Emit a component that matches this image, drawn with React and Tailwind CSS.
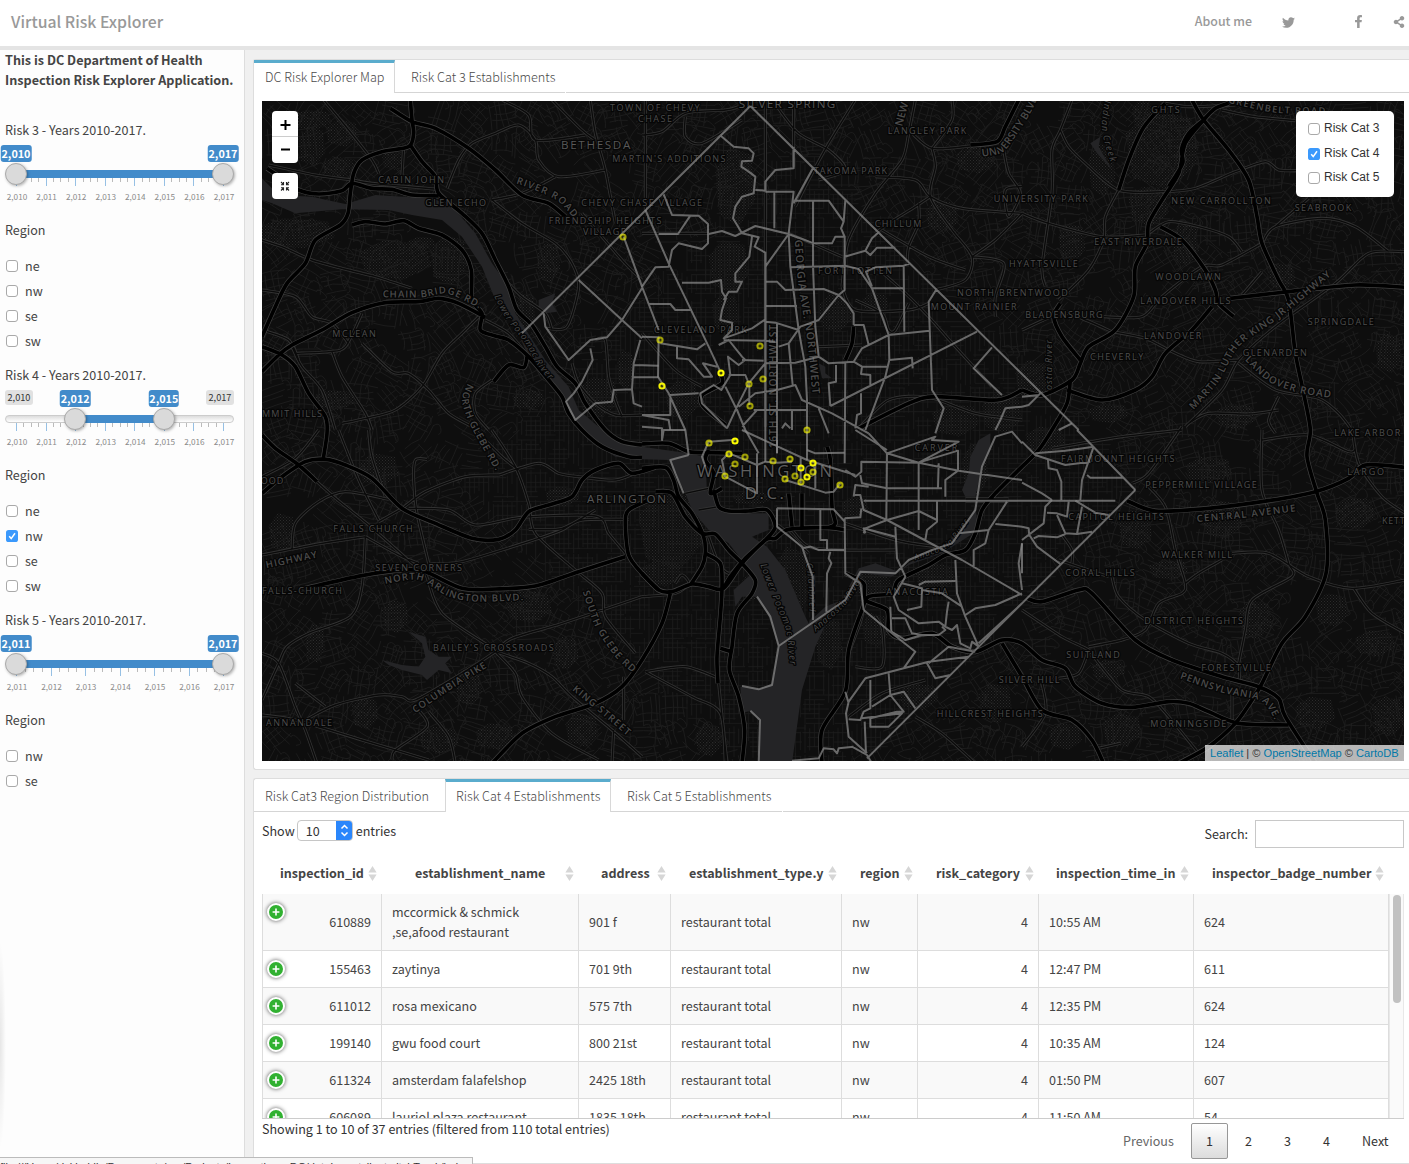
import React from "react";
import { FaTwitter, FaFacebookF, FaShareAlt } from "react-icons/fa";

const UI = "font-['Noto_Sans_CJK_SC','Noto_Sans',sans-serif]";

/* ---------- map data: six sheets, three units per pixel ---------- */
const SHEETS = { A: [0, 0], B: [1140, 0], C: [2280, 0], D: [0, 990], E: [1140, 990], F: [2280, 990] };

const MOTORWAYS = {
  A: `445,0 450,60 455,100 440,140 360,155 300,180 275,220 265,280 258,340 235,375 160,420 130,490 75,550 40,620 0,710
445,135 480,185 520,230 530,280 600,340 660,400 700,480 740,560 765,630 810,675 850,740 885,800 940,850 970,910 1030,990 1080,1025 1140,1035
385,25 450,65 520,85 620,145 700,210 780,285 860,310 910,350
15,205 60,235 110,270 170,282 240,272 270,250 330,265 390,268 450,285 530,288
270,375 310,365 370,372 425,362 470,385 540,405 600,450 628,510 630,600 660,640 655,690 700,708 740,720 800,770 860,840 900,890 920,940 960,990 1020,1040 1100,1070 1140,1072
0,815 50,765 90,735 180,690 270,638 370,608 470,605 530,595 590,610 670,652
0,740 60,765 100,800 140,880 190,950 195,1000 184,1075
695,845 740,795 785,803 795,770`,
  B: `1140,870 1065,900 880,890 800,910 650,985
985,135 1065,125 1090,80 1130,0
235,820 240,850 180,885 185,920 250,975
635,680 630,730 610,780`,
  C: `510,0 545,60 620,150 680,240 705,350 720,430 770,540 800,600 820,760 845,880 865,990 855,1070 885,1180 910,1260 912,1420 850,1550 780,1630 720,1750 690,1800 640,1870 560,1940 470,1990
620,10 580,25 545,60 490,130 470,220 420,300 380,370 375,430 340,500 335,590 280,690 200,740 175,790 150,840 60,885 0,870
545,60 500,100 478,150 482,190 440,260
430,10 400,40 360,90 320,180 290,270
415,380 480,420 550,510 580,570 590,610 635,650
135,870 240,900 340,870 390,830 430,760 510,690 570,620
625,595 800,575 1000,555 1150,562
115,610 95,650 120,710 175,780`,
  D: `0,190 60,140 130,95 190,88 250,105 330,145 420,235 520,280 630,325 710,328 760,300 800,245 860,225 930,200 960,150 1000,120 1070,100 1110,130 1180,112
0,15 40,55 110,105 165,155
130,475 300,437 420,420 490,425 600,475 700,477 820,468 950,425 1090,380
1160,210 1100,240 1090,280 1100,375 1140,430 1190,480
690,1000 780,910 880,860 1000,820 1080,770 1140,690 1200,580 1225,490`,
  E: `0,42 80,40 140,65 210,68 300,70
0,115 70,112 95,150 110,200 150,250 185,320 190,370 180,410 145,465
0,430 50,480 90,485 150,462 200,470 245,475 300,400 370,330 400,325 440,298 560,293 610,300
40,185 90,190 130,260 180,310 220,312 260,360 300,400 340,450 330,490 285,550 270,650 262,720 290,800 308,900 300,1000
190,370 235,400 240,475 235,560 225,680 228,760
215,180 230,230 260,243 320,243 375,240 400,290 370,330 310,385 265,440 245,475
555,50 565,90 570,230 580,280 560,293
200,60 190,90 215,130 205,190 240,175
440,190 450,290
480,190 480,290
235,655 268,665
540,1000 540,900 610,785 620,660 660,540 680,500 750,490 770,450 860,405 910,375 970,360 1000,310 1020,240 1060,190 1140,110 1190,60 1230,0 1275,-80 1285,-150
610,430 665,460 670,510 735,540 740,600 780,625 870,610 930,650 1000,665 1080,630 1140,640 1200,690 1270,715 1300,770 1380,820 1470,832 1580,815 1640,820 1700,845 1790,880 1940,885
970,210 1100,210
1080,640 1140,740 1200,840 1290,870 1350,930 1385,1000`,
  F: `15,505 60,515 170,480 210,490 340,630 450,690 600,740 710,770 770,805 790,860 880,1000
315,212 400,243 560,235 740,212 880,185 980,145 1030,105 1150,112`,
};

const ROADS = {
  A: `185,0 260,90 330,180 350,220
20,195 160,225 270,240 330,250 530,268
425,140 420,225
0,420 60,440 150,480 260,510 340,530 450,565
0,570 100,590 150,650 210,670 260,730
555,265 590,180 630,130 700,100 770,75 820,120 830,180 890,230 1030,210
870,0 960,90 1000,120
985,0 1000,100 1030,210 1060,370
720,0 800,45 820,120 970,105
690,300 780,370 880,430 930,490 950,560 915,680 855,685
90,740 120,800 180,870 220,990
100,760 200,755 250,740 300,640
210,755 240,830 310,940 330,990
300,730 390,815 440,820 500,870 560,940 640,985
240,970 310,955 400,930 480,860 540,760 600,700 650,650
690,840 640,880 640,940 680,990
670,660 740,700 800,770
690,300 780,280 880,230
730,540 780,590 850,640 870,690
930,790 950,850 1000,910 1060,945 1140,945
960,340 1080,480 1140,540
1000,720 1030,720 1040,830 1060,900 1080,950
0,690 80,720 110,780`,
  B: `10,0 10,330
0,105 60,95 130,40 250,30 290,20
130,50 130,110 180,130 300,60
370,0 370,980
455,0 455,200
405,20 470,100 560,150 610,210 530,240
640,0 560,130 500,240 460,320
820,0 800,100 780,180 700,280 620,420 600,560
930,0 930,60 870,145
810,100 870,145 985,138
870,145 880,200 865,290 930,390 990,470 970,540 880,570
700,230 820,240 865,290 960,325 1140,340
865,290 820,320 740,370 700,400
830,310 830,370 800,440 795,500
990,470 1085,490 1060,590 1060,650
1085,150 1100,220 1135,280 1100,350 1090,270 1140,260
1140,340 1060,420 990,470
440,400 600,470
720,390 860,470 970,510
600,560 640,630 800,630 860,610
700,500 780,570 860,650 940,740 1050,860
0,700 100,810 180,860
530,740 660,735
0,400 200,400
640,600 720,640 740,690 760,690 800,610
650,985 740,900 860,892 1000,940 1140,960`,
  C: `150,0 115,90 90,150 90,280 60,500 70,560
115,90 140,140 190,190 290,270 420,275 520,265 640,215 730,185 770,210 830,212
290,270 250,350 245,420 200,510 110,600
0,340 80,370 240,410 370,405
380,400 440,365 530,380 620,410 660,455
720,430 600,495 540,500 420,590 360,650 245,650
720,430 760,380 900,355 1000,380 1100,455
760,380 860,295
490,980 600,870 650,780 760,680 940,550 1040,460 1150,455
660,585 720,515
270,695 370,715 450,755 530,785 650,780
650,790 760,870 890,895 950,940 990,990
770,890 740,960 760,1000
500,970 560,940 680,942 770,930
600,30 700,50 820,62
430,10 500,20 640,15
0,690 120,640 190,660 270,695`,
  D: `0,375 180,340 310,320
90,360 100,280 170,215 250,185 380,208
110,105 215,200 320,285 450,400 490,430 540,550 700,660
230,0 290,150 350,270
320,0 330,80 370,200
495,88 460,90 455,150 465,250 500,400
350,275 420,235 490,185 610,140 710,135
710,135 830,100 890,130 950,140 1060,150 1140,120
690,0 760,110 800,220 820,310 940,420 1020,490 1030,560 1120,670
640,0 720,80 770,120
440,235 560,240 640,285 780,262 1000,258 1040,310 1090,370
500,400 600,395 830,325 900,300 960,270 1100,268
310,320 300,470 265,560 140,610 75,650 50,700 0,810
0,670 50,700 100,830 130,900 165,1000
130,870 220,825 350,795 420,800 460,810 600,730 700,665 750,625 900,580 1140,500
100,760 190,830
700,665 800,700 870,740 930,800 1050,900 1140,980
700,665 760,730 780,800 870,910 1010,990
0,855 100,870 300,930 500,990
470,840 495,890 400,960 390,990
500,845 560,920 580,1000
1050,1000 1055,900
1085,870 1085,740
0,140 100,85 170,0
800,298 900,295 1000,240
310,320 420,380 470,400`,
  E: `10,725 130,710 230,745
10,725 150,800 235,850 250,1000
230,760 240,860 255,1000
820,860 900,910 1000,1000
620,860 720,790 850,750
450,300 500,350 600,360 760,360
640,710 720,710 722,600 700,560
130,190 200,175
170,240 230,230
0,500 100,490 140,460 120,435 100,460
400,280 440,310 500,370
610,280 760,330 880,350
200,320 230,400 260,430 285,410
620,670 660,560 668,470`,
  F: `90,55 300,20 480,0
480,-10 380,130 330,160
370,160 430,230 460,360 490,460 480,490 410,520 370,600 300,630 200,650
720,0 720,180 770,300 800,400 810,440 690,510 670,600 650,700
720,30 860,15 980,65 1000,55
990,-10 1010,100 1080,200 1150,250
630,370 740,370 860,440 990,475 1150,450
995,475 1050,550 1150,610
490,460 530,430 600,390
270,440 290,500 370,570 500,640 600,670 650,710 650,760
110,390 260,440
0,540 120,620 200,660 230,700 300,780 380,800 440,860 530,970
200,660 170,730 110,745
630,780 630,870
60,760 70,850 0,950
230,955 295,940
120,315 150,360 150,400`,
};

const TRACTS = {
  A: `1465,18 780,700
950,540 1080,660 1140,715
1085,410 1140,560
1140,565 1080,660 1035,712 985,720 920,780 850,680 845,640
985,745 992,780 960,845 935,880 912,905 940,960 1000,910 1050,905 1055,870 1110,868 1115,910 1140,920
1135,720 1115,790 1110,868
1115,795 1190,797
1115,832 1190,832`,
  B: `325,18 1310,990
237,108 275,140 320,145 335,160 330,182 300,184 298,200 320,215 340,230 335,280 300,290 280,320 273,355 300,400 350,412 338,440 370,458
200,402 240,393 280,408 340,378 440,402 515,430 570,430 580,410 605,410
340,270 370,272 370,245 400,210 455,205 455,140
370,275 455,275 440,400 445,500 470,690 490,800 495,900 495,1080
397,275 397,385
455,302 560,302 605,365 610,300
605,365 597,385 608,410 608,570 590,585 530,660 475,680 440,730 410,740
515,200 455,310
513,302 513,500 520,680 530,770 560,790 635,785 660,745 740,705
440,402 370,500
370,455 370,1085
445,502 608,497 650,507 690,565 740,705 742,780 730,830 670,990
608,470 670,452 690,415 712,395
670,452 685,465 705,443 760,443
690,560 672,515 700,502 785,497 805,490
785,497 787,695
690,565 785,565
740,705 863,692
882,570 860,605 870,870 905,925 880,1000
1005,695 565,918
1050,742 995,805 1080,885
370,545 405,545 430,570 545,567 590,585
370,618 465,618
370,665 400,668 470,690
300,780 365,782
370,790 460,788 530,770
405,670 405,1060
440,730 452,855
10,330 80,490 200,740 235,815
65,283 90,345 170,347 198,372 198,430 180,447 110,430 90,450 80,500 40,502 0,560 50,690
50,402 108,402 145,347
120,548 200,548 237,540 240,575 252,595 240,630 235,660 270,668 270,690 245,715 330,685 370,658
330,410 322,470 280,520 280,545 300,545 285,575 260,575 245,600
20,612 85,612 100,630 150,630
0,710 50,712 48,830 80,880 130,990 140,1065
55,730 105,738 165,748 190,730
105,738 105,775 140,778 185,830 210,830 183,790 225,800
230,735 260,720 300,770 310,780 290,795 258,770 265,825 238,870 215,855 175,880 180,910 230,960 255,985
260,825 310,825 322,855 322,915
0,945 85,945 85,885 170,880
0,945 80,960 85,990
250,860 285,930 310,990 350,1060
370,790 320,850 285,920 255,985
290,920 340,880 405,870 460,855 480,900 570,940 680,1000
335,930 495,930
300,980 345,930
565,918 560,850 582,845 582,795
610,785 608,1090
635,785 660,800 735,800
660,800 657,822 685,825 685,860
657,880 657,940 645,945 640,985
742,780 810,773 812,805
530,925 560,1000
1140,920 1090,925 1075,960 1060,990
635,675 665,675 680,735
590,585 615,610 635,640 635,675
245,720 370,722 400,725
420,985 430,970 445,985
450,930 450,990`,
  C: `0,920 20,915 55,880
150,970 110,990
0,890 50,885`,
  E: `405,30 405,70
140,75 85,90 100,130 125,190
280,30 270,30 200,35 180,80 190,110
0,-10 60,-5 60,30 65,0 130,0
300,0 495,90 640,135
495,60 520,70 608,68
680,10 735,70 830,98 950,122 1140,150
640,0 735,60
735,70 733,270
830,98 830,300
735,70 880,20 870,30 950,35 830,98
610,120 640,140 658,125 658,95 830,98 948,62 948,122 910,150 910,200
655,135 660,160 735,175 900,175
635,200 640,165 680,170
890,100 888,172
635,195 655,195 665,240 735,270 960,390 1140,495
665,212 1420,212
885,215 885,275 855,300 850,330
665,310 670,295 735,270 830,243 885,270
608,265 655,262 658,235
608,265 610,430 655,460 665,540
405,235 575,238 608,275
345,70 345,190 250,140 240,90 260,70
262,70 345,105 370,95 405,98 450,95
430,150 550,188 575,185 595,160
520,100 520,175
476,80 476,160
405,235 405,290 480,350 490,380 512,440 513,570
535,240 535,330 555,330 555,360
480,355 505,350 530,360 608,360
565,365 560,385 568,400 555,430 553,545
410,648 610,510 655,425 760,430 800,390 870,360 930,340 1000,240 1020,110 1060,20 1110,5 1140,40
410,648 385,560 345,500
410,648 390,765 350,778 300,768
350,1000 354,870 325,842
610,785 620,820
665,540 750,610 820,665 785,715 670,745 620,815 612,850 620,920 675,970
450,992 530,985 545,955 575,958 585,970 590,955 635,950
740,730 745,795
785,715 860,695 980,680
855,700 880,745 925,735
860,700 920,650 1000,665
685,750 685,835 665,845 655,870 620,868
660,865 780,850 740,890 685,890 685,865 765,845 785,845 745,795 690,830
745,795 785,785 820,835
668,875 672,970
630,950 675,975 690,1000
760,290 765,385 790,440 755,500 770,540 830,580 890,575 910,590 915,545 920,515
780,460 840,475 838,530 795,540
830,465 850,455 940,453
940,390 945,490 970,560 1010,650
840,480 900,490 960,530
745,530 748,605 790,630 840,615 890,615 910,600 900,590
910,590 930,600 945,585 955,640 985,655 990,635 1010,650
750,565 790,565 810,610 840,615
970,555 1000,535 1060,525 1140,490
1095,215 1040,300 950,310
1040,300 1030,340 995,360 995,415
1140,290 1060,282
1140,340 1130,400 1140,480
1010,640 1140,520
675,985 1480,180
670,310 665,295 760,320`,
  F: `0,158 60,190 90,210
0,35 40,75 130,105 205,95
40,70 130,62 215,50
215,50 180,150 175,210
78,90 80,115 105,120 118,155 118,210
165,0 340,180
195,135 205,143 305,143
90,210 70,230 65,280 0,330
75,248 105,250 120,255 135,260 140,215
105,255 130,310 165,312 210,305
160,212 220,248 260,255
180,230 165,312
35,325 50,318 105,322 130,312
22,315 45,350 115,402
0,290 20,295 22,320
0,340 0,430`,
};

const WATER = [
  ["A", "0,235 50,285 150,290 250,312 340,285 450,292 520,298 580,330 640,400 690,490 740,560 760,640 850,780 920,860 950,930 1010,980 1080,1030 1140,1040 1280,1060 1330,1070 1335,1180 1270,1180 1220,1080 1140,1078 1060,1070 980,1020 930,950 880,860 800,770 750,660 700,600 660,500 600,410 540,360 450,345 380,330 240,328 100,340 30,310 0,300"],
  ["E", "130,190 200,180 240,240 300,250 380,250 380,300 330,320 375,350 430,420 490,560 500,580 510,560 505,430 480,360 520,440 518,560 550,530 600,510 650,415 700,400 770,425 800,400 900,345 960,300 1000,230 1010,300 900,370 800,405 750,440 660,430 610,530 550,585 520,650 480,780 450,1000 350,1000 354,870 325,842 300,850 295,770 350,778 390,760 410,650 380,560 345,500 300,500 280,530 275,480 330,430 260,340 200,300 150,240"],
  ["D", "360,690 420,705 470,710 490,680 480,640 440,605 490,620 500,660 530,680 570,680 550,700 570,730 530,720 495,750 480,735 420,720 380,705"],
  ["A", "830,600 880,580 870,610 885,635 850,640 830,620"],
  ["B", "530,790 550,800 550,820 570,835 540,835"],
  ["C", "205,130 235,110 230,140 270,210 225,160"],
  ["E", "985,80 1010,30 1045,10 1045,60 1020,110 1000,200 970,200 960,180 980,130"],
];

const PARKS = [
  ["A", 150, 140, 40, 60], ["A", 240, 100, 50, 40], ["A", 230, 200, 50, 30], ["A", 100, 400, 120, 45], ["A", 150, 60, 60, 30],
  ["A", 860, 490, 35, 60], ["A", 400, 480, 110, 60], ["A", 560, 480, 55, 75], ["A", 790, 640, 30, 60], ["A", 800, 900, 50, 30],
  ["A", 390, 180, 30, 30], ["A", 1010, 890, 60, 60], ["A", 1090, 810, 25, 60], ["A", 480, 430, 40, 20], ["A", 220, 900, 60, 30],
  ["B", 280, 260, 60, 120], ["B", 260, 500, 60, 80], ["B", 250, 640, 40, 60], ["B", 580, 640, 50, 60], ["B", 1000, 180, 60, 40],
  ["B", 940, 960, 70, 50], ["B", 700, 610, 40, 30], ["B", 120, 900, 50, 60], ["B", 900, 350, 50, 50], ["B", 1080, 940, 60, 60],
  ["C", 420, 150, 110, 120], ["C", 490, 430, 40, 70], ["C", 240, 210, 40, 80], ["C", 380, 320, 60, 60], ["C", 30, 840, 50, 60],
  ["C", 780, 530, 40, 40], ["C", 1100, 760, 40, 60], ["C", 640, 950, 60, 40], ["C", 260, 940, 60, 30], ["C", 360, 40, 30, 40], ["C", 150, 430, 40, 60],
  ["D", 60, 310, 40, 60], ["D", 350, 120, 60, 50], ["D", 800, 530, 70, 50], ["D", 160, 640, 30, 60], ["D", 400, 560, 40, 50],
  ["D", 310, 850, 40, 50], ["D", 620, 770, 40, 60], ["D", 910, 670, 40, 50], ["D", 530, 930, 60, 40], ["D", 900, 200, 50, 30], ["D", 700, 920, 60, 40], ["D", 960, 900, 50, 50],
  ["E", 90, 300, 100, 120], ["E", 60, 430, 60, 40], ["E", 450, 460, 55, 110], ["E", 560, 640, 40, 80], ["E", 640, 230, 40, 30],
  ["E", 880, 440, 60, 40], ["E", 330, 470, 30, 40], ["E", 1000, 120, 40, 80], ["E", 700, 600, 40, 50], ["E", 830, 800, 60, 40], ["E", 200, 930, 40, 50], ["E", 1060, 820, 50, 60], ["E", 690, 460, 60, 40], ["E", 330, 205, 60, 20],
  ["F", 600, 270, 60, 60], ["F", 340, 300, 50, 60], ["F", 700, 570, 50, 60], ["F", 880, 850, 60, 50], ["F", 560, 120, 70, 40],
  ["F", 1060, 640, 60, 40], ["F", 300, 900, 60, 50], ["F", 930, 540, 50, 50], ["F", 70, 30, 60, 40], ["F", 440, 420, 60, 30], ["F", 1000, 250, 60, 50], ["F", 130, 920, 50, 40], ["F", 260, 720, 50, 30], ["F", 1100, 860, 50, 60],
];

const LABELS = {
  A: [["TOWN OF CHEVY", 1044, 34, 269], ["CHASE", 1128, 66, 102], ["BETHESDA", 897, 148, 208, 35], ["MARTIN'S ADDITIONS", 1051, 185, 339], ["CABIN JOHN", 349, 250, 197], ["GLEN ECHO", 490, 318, 182], ["CHEVY CHASE VILLAGE", 958, 319, 362], ["FRIENDSHIP HEIGHTS", 860, 371, 338], ["VILLAGE", 963, 405, 128], ["MCLEAN", 211, 712, 130], ["MMIT HILLS", 0, 952, 180]],
  B: [["SILVER SPRING", 290, 23, 290, 35], ["LANGLEY PARK", 737, 101, 236], ["TAKOMA PARK", 515, 221, 220], ["CHILLUM", 698, 381, 140], ["FORT TOTTEN", 528, 521, 222], ["NORTH BRENTWOOD", 945, 587, 332], ["MOUNT RAINIER", 866, 631, 258], ["CLEVELAND PARK", 36, 700, 278], ["HYATTSVILLE", 1101, 501, 206], ["UNIVERSITY PARK", 1055, 306, 282]],
  C: [["GHTS", 388, 40, 85], ["NEW CARROLLTON", 448, 312, 298], ["SEABROOK", 818, 334, 170], ["EAST RIVERDALE", 217, 435, 262], ["WOODLAWN", 400, 541, 196], ["LANDOVER HILLS", 355, 612, 270], ["BLADENSBURG", 10, 655, 232], ["LANDOVER", 366, 716, 172], ["CHEVERLY", 204, 780, 160], ["GLENARDEN", 662, 768, 192], ["SPRINGDALE", 857, 674, 198]],
  D: [["OOD", -4, 162, 68], ["FALLS CHURCH", 214, 305, 238], ["SEVEN CORNERS", 340, 424, 260], ["FALLS-CHURCH", 0, 492, 240], ["BAILEY'S CROSSROADS", 513, 663, 362], ["ANNANDALE", 12, 888, 198], ["ARLINGTON", 975, 219, 237, 35]],
  E: [["WASHINGTON", 165, 142, 405, 50], ["D.C.", 308, 208, 118, 50], ["CARVER", 818, 62, 128], ["ANACOSTIA", 733, 495, 184], ["SILVER HILL", 1070, 760, 182], ["HILLCREST HEIGHTS", 884, 860, 318]],
  F: [["LAKE ARBOR", 937, 19, 198], ["FAIRMOUNT HEIGHTS", 117, 96, 340], ["LARGO", 976, 134, 110], ["PEPPERMILL VILLAGE", 370, 173, 334], ["CAPITOL HEIGHTS", 139, 271, 286], ["KETT", 1080, 281, 68], ["WALKER MILL", 418, 383, 212], ["CORAL HILLS", 130, 438, 208], ["DISTRICT HEIGHTS", 367, 583, 296], ["SUITLAND", 133, 683, 160], ["FORESTVILLE", 538, 724, 208], ["MORNINGSIDE", 385, 892, 228]],
};

// [sheet, text, guide points, size, length, italic]
const CURVED = [
  ["A", "RIVER ROAD", "762,250 830,275 890,305 940,360", 29, 205],
  ["A", "CHAIN BRIDGE RD.", "362,592 480,592 560,582 665,632", 29, 300],
  ["A", "Lower Potomac River", "697,590 735,660 790,730 830,800 880,860", 27, 300, true],
  ["A", "NORTH GLEBE RD.", "617,850 600,900 620,965 660,1040 712,1130", 29, 290],
  ["B", "GEORGIA AVE. NORTHWEST", "458,420 470,560 496,720 512,890", 32, 465],
  ["B", "16TH ST. NORTHWEST", "405,1045 405,900 405,665", 31, 370],
  ["B", "NEW", "780,80 802,0", 32, 72],
  ["B", "UNIVERSITY BLVD.", "1020,170 1080,158 1120,110 1170,30 1200,-40", 31, 270],
  ["C", "GREENBELT ROAD", "618,8 760,38 915,42", 28, 295],
  ["C", "Indian Creek", "248,0 240,90 268,195", 28, 190, true],
  ["C", "MARTIN LUTHER KING JR.HIGHWAY", "515,930 590,845 650,740 770,655 935,520", 30, 585],
  ["C", "LANDOVER ROAD", "668,780 740,845 830,878 935,895", 30, 290],
  ["C", "ostia River", "90,870 90,715", 27, 150, true],
  ["D", "HIGHWAY", "14,415 168,382", 29, 155],
  ["D", "NORTH ARLINGTON BLVD.", "370,462 470,450 560,500 650,515 795,510", 29, 430],
  ["D", "COLUMBIA PIKE", "460,850 560,782 675,712", 29, 255],
  ["D", "SOUTH GLEBE RD", "962,485 1000,590 1060,680 1120,735", 29, 290],
  ["D", "KING STREET", "930,780 1010,845 1105,925", 29, 215],
  ["E", "Lower Potomac River", "355,405 400,520 432,600 445,710", 28, 315, true],
  ["E", "Channel", "492,400 500,470 502,550", 27, 145, true],
  ["E", "Anacostia River", "522,605 610,525 665,440", 27, 210, true],
  ["E", "Anacostia River", "820,390 920,350 990,260", 24, 205, true],
  ["F", "CENTRAL AVENUE", "525,276 680,262 825,243", 29, 298],
  ["F", "PENNSYLVANIA AVE.", "473,745 600,788 720,815 768,890", 29, 325],
];

// [x, y, opacity] in page pixels relative to the map's origin
const POINTS = [[361, 136.5, 0.6], [398, 239.5, 0.6], [400, 285.5, 0.95], [459, 272.5, 1], [498, 245.5, 0.6], [501, 278.5, 0.6], [487, 283.5, 0.6], [488, 305.5, 0.6], [545, 329.5, 0.65], [447, 342.5, 0.65], [473, 340.5, 1], [467, 353.5, 0.8], [483, 356.5, 0.6], [473, 363.5, 0.6], [463, 375.5, 0.65], [511, 360.5, 0.6], [528, 358.5, 0.65], [539, 367.5, 0.95], [551, 362.5, 0.95], [551, 371.5, 0.65], [533, 375.5, 0.6], [545, 376.5, 0.95], [539, 381.5, 0.65], [523, 378.5, 0.65], [578, 384.5, 0.65]];

const toPts = (s) => s.trim().split(/\s+/).map((p) => p.split(",").map(Number));
function smooth(s) {
  const p = toPts(s);
  let d = `M${p[0]}`;
  for (let i = 0; i < p.length - 1; i++) {
    const a = p[i - 1] || p[i], b = p[i], c = p[i + 1], e = p[i + 2] || c;
    d += `C${b[0] + (c[0] - a[0]) / 7},${b[1] + (c[1] - a[1]) / 7} ${c[0] - (e[0] - b[0]) / 7},${c[1] - (e[1] - b[1]) / 7} ${c}`;
  }
  return d;
}
const smoothAll = (s) => s.split("\n").map(smooth).join("");
const straightAll = (s) => s.split("\n").map((l) => "M" + l.trim().split(/\s+/).join("L")).join("");

function random(seed) {
  let s = seed;
  return () => ((s = (s * 1664525 + 1013904223) >>> 0) / 4294967296);
}
// Residential streets: small rotated blocks outside the district, an upright grid inside it.
function makeStreets() {
  const r = random(71);
  let out = "", grid = "";
  const inside = (x, y) => Math.abs(x - 1570) + Math.abs(y - 1100) < 1050 && x + y > 1500 && x - y < 1480;
  for (let cy = 0; cy < 2000; cy += 85) {
    for (let cx = 0; cx < 3450; cx += 85) {
      if (inside(cx, cy)) {
        for (let k = 0; k < 6; k++) {
          if (r() > 0.15) grid += `M${cx + k * 14},${cy + r() * 30}v${40 + r() * 50}`;
          if (r() > 0.25) grid += `M${cx + r() * 30},${cy + k * 14}h${30 + r() * 60}`;
        }
        continue;
      }
      if (r() < 0.08) continue;
      const t = r() * 3.14, c = Math.cos(t), s = Math.sin(t);
      const q = (u, v) => `${(cx + 42 + u * c - v * s).toFixed(0)},${(cy + 42 + u * s + v * c).toFixed(0)}`;
      for (let k = -2; k < 3; k++) {
        const u = k * 19 + r() * 8, a = -50 + r() * 35, b = 15 + r() * 40, w = r() * 24 - 12;
        out += `M${q(u, a)}Q${q(u + w, (a + b) / 2)} ${q(u + w / 2, b)}`;
        if (r() > 0.35) out += `M${q(a, u)}Q${q((a + b) / 2, u - w)} ${q(b * 0.7, u)}`;
        if (r() > 0.6) out += `M${q(u, a)}q${(r() * 20).toFixed(0)},-12 22,6t-6,20`;
      }
    }
  }
  return [out, grid];
}
const [STREETS, GRID] = makeStreets();

const eachSheet = (data, draw) =>
  Object.keys(data).map((k) => (
    <g key={k} transform={`translate(${SHEETS[k].join(" ")})`}>{draw(data[k])}</g>
  ));

function RiskMap() {
  const halo = { paintOrder: "stroke" };
  return (
    <svg className="block h-[660px] w-[1142px] bg-[#0e0e0e]" viewBox="0 3 3426 1980" preserveAspectRatio="none">
      <defs>
        <pattern id="dots" width="9" height="9" patternUnits="userSpaceOnUse">
          <rect x="0" y="0" width="3" height="3" fill="#2b2b2b" />
          <rect x="4.5" y="4.5" width="3" height="3" fill="#2b2b2b" />
        </pattern>
      </defs>
      {PARKS.map(([s, x, y, rx, ry], i) => {
        const X = SHEETS[s][0] + x, Y = SHEETS[s][1] + y;
        return (
          <path key={i} fill="url(#dots)" d={`M${X - rx},${Y - ry * 0.4}L${X - rx * 0.3},${Y - ry}L${X + rx * 0.8},${Y - ry * 0.8}L${X + rx},${Y + ry * 0.3}L${X + rx * 0.2},${Y + ry}L${X - rx * 0.8},${Y + ry * 0.7}Z`} />
        );
      })}
      <g fill="none" strokeLinecap="round" strokeLinejoin="round">
        <path d={STREETS} stroke="#1e1e1e" strokeWidth="2.6" />
        <path d={GRID} stroke="#1d1d1d" strokeWidth="2.6" />
      </g>
      {WATER.map(([s, pts], i) => (
        <polygon key={i} points={pts} fill="#242426" transform={`translate(${SHEETS[s].join(" ")})`} />
      ))}
      <g fill="none" strokeLinejoin="round">
        <g stroke="#323232" strokeWidth="9">{eachSheet(ROADS, (d) => <path d={smoothAll(d)} />)}</g>
        <g stroke="#0a0a0a" strokeWidth="4">{eachSheet(ROADS, (d) => <path d={smoothAll(d)} />)}</g>
        <g stroke="#404040" strokeWidth="15">{eachSheet(MOTORWAYS, (d) => <path d={smoothAll(d)} />)}</g>
        <g stroke="#000" strokeWidth="11">{eachSheet(MOTORWAYS, (d) => <path d={smoothAll(d)} />)}</g>
      </g>
      <g fontFamily="'Open Sans','Noto Sans',sans-serif" fill="#4b4b4b" stroke="#060606" strokeWidth="8" strokeLinejoin="round" style={halo}>
        {eachSheet(LABELS, (rows) =>
          rows.map(([t, x, y, w, size = 27]) => (
            <text key={t} x={x} y={y} fontSize={size} fontWeight="500" textLength={w} style={halo} fill={size > 40 ? "#5e5e5e" : size > 30 ? "#585858" : "#4d4d4d"}>{t}</text>
          ))
        )}
        {CURVED.map(([s, t, pts, size, len, italic], i) => (
          <g key={i} transform={`translate(${SHEETS[s].join(" ")})`}>
            <path id={`guide${i}`} d={smooth(pts)} fill="none" stroke="none" />
            <text fontSize={size} fontWeight={italic ? 400 : 600} fontStyle={italic ? "italic" : "normal"} style={halo}>
              <textPath href={`#guide${i}`} textLength={len}>{t}</textPath>
            </text>
          </g>
        ))}
      </g>
      <g fill="none" stroke="#8a8a8a" strokeOpacity="0.72" strokeWidth="6" strokeLinejoin="round">
        {eachSheet(TRACTS, (d) => <path d={straightAll(d)} />)}
      </g>
      <g fill="#ff0" fillOpacity="0.2" stroke="#ff0" strokeWidth="6">
        {POINTS.map(([x, y, o], i) => (
          <circle key={i} cx={x * 3} cy={y * 3 + 1.5} r="7.8" opacity={o} />
        ))}
      </g>
    </svg>
  );
}

/* ---------- controls ---------- */
function Check({ on }) {
  return on ? (
    <svg className="size-3 shrink-0" viewBox="0 0 12 12">
      <rect width="12" height="12" rx="2.6" fill="#3b99fc" />
      <path d="M3.2 6.3 5.2 8.6 9 3.2" fill="none" stroke="#fff" strokeWidth="1.5" />
    </svg>
  ) : (
    <span className="size-3 shrink-0 rounded-[3px] border border-[#a9a9a9] bg-white" />
  );
}

function Slider({ min, max, from, to }) {
  const n = max - min;
  const at = (v) => 16 + (207 * (v - min)) / n;
  const ticks = Array.from({ length: n * 4 + 1 }, (_, i) => i);
  const open = from > min || to < max;
  return (
    <div className="relative flex h-[65px] flex-col">
      <div className="mr-[10px] ml-[5px] flex h-[30px] justify-between pt-[5px] text-[9.2px] leading-[15px] text-[#333]">
        {open && <span className="h-[15px] w-7 rounded-[3px] bg-[#e1e1e1] text-center">{`2,${String(min).slice(1)}`}</span>}
        {open && <span className="h-[15px] w-7 rounded-[3px] bg-[#e1e1e1] text-center">{`2,${String(max).slice(1)}`}</span>}
      </div>
      <div className={open ? "mr-[10px] ml-[5px] h-2 rounded-[8px] border border-[#ccc] bg-linear-to-b from-[#ddd] to-white" : "h-2"} />
      <svg className="block h-2 w-[240px]" viewBox="0 0 240 8">
        {ticks.map((i) => (
          <rect key={i} x={Math.round(at(min + i / 4))} y="0" width="1" height={i % 4 ? 4 : 8} fill={i % 4 ? "#bbb" : "#96c0e4"} />
        ))}
      </svg>
      <div className="absolute top-[30px] h-2 bg-[#428bca]" style={{ left: at(from), width: at(to) - at(from) }} />
      {[from, to].map((v) => (
        <React.Fragment key={v}>
          <span className="absolute top-[5px] h-[17px] w-[30.5px] -translate-x-1/2 rounded-[3px] bg-[#428bca] text-center text-[10.8px] leading-[16px] font-bold text-white" style={{ left: at(v) }}>
            {`2,${String(v).slice(1)}`}
          </span>
          <span className="absolute top-[22.5px] size-[22px] -translate-x-1/2 rounded-full border border-[#aaa] bg-[#dadada] shadow-[1px_1px_3px_rgba(0,0,0,0.3)]" style={{ left: at(v) }} />
        </React.Fragment>
      ))}
      {Array.from({ length: n + 1 }, (_, i) => (
        <span key={i} className="absolute top-[50px] -translate-x-1/2 text-[8.2px] leading-3 text-[#8a8a8a]" style={{ left: at(min + i) + 1 }}>
          {`2,${String(min + i).slice(1)}`}
        </span>
      ))}
    </div>
  );
}

function Filter({ title, slider, regions, checked }) {
  return (
    <section className="h-[245px]">
      <p className="h-5 px-[5px] leading-5">{title}</p>
      <Slider {...slider} />
      <p className="mt-[15px] h-5 px-[5px] leading-5">Region</p>
      <div className="pt-[13.5px]">
        {regions.map((r) => (
          <div key={r} className="flex h-[25px] items-center gap-[7px] pl-[6px]">
            <Check on={r === checked} />
            <span className="leading-5">{r}</span>
          </div>
        ))}
      </div>
    </section>
  );
}

function Tabs({ tabs, active }) {
  return (
    <div className="flex h-[33px] shrink-0 text-[12.65px] font-light text-[#4a4a4a]">
      {tabs.map(([t, w, pad], i) =>
        i === active ? (
          <div key={t} className={`${w} ${pad} shrink-0 border-t-[3px] border-t-[#5aaccd] border-r border-r-[#d8d8d8] leading-[28px] whitespace-nowrap ${i ? "border-l border-l-[#d8d8d8]" : ""}`}>{t}</div>
        ) : (
          <div key={t} className={`${w} ${pad} shrink-0 border-b border-[#d5d5d5] pt-[3px] leading-[28px] whitespace-nowrap`}>{t}</div>
        )
      )}
      <div className="ml-px grow border-b border-[#d5d5d5]" />
    </div>
  );
}

const COLS = "grid-cols-[119px_197px_92px_171px_76px_121px_155px_195px]";
const HEADS = [["inspection_id", "pl-[18px]"], ["establishment_name", "pl-[34px]"], ["address", "pl-[23px]"], ["establishment_type.y", "pl-[19px]"], ["region", "pl-[19px]"], ["risk_category", "pl-[19px]"], ["inspection_time_in", "pl-[18px]"], ["inspector_badge_number", "pl-[19px]"]];
const ROWS = [
  ["610889", "mccormick & schmick\n,se,afood restaurant", "901 f", "10:55 AM", "624"],
  ["155463", "zaytinya", "701 9th", "12:47 PM", "611"],
  ["611012", "rosa mexicano", "575 7th", "12:35 PM", "624"],
  ["199140", "gwu food court", "800 21st", "10:35 AM", "124"],
  ["611324", "amsterdam falafelshop", "2425 18th", "01:50 PM", "607"],
  ["606089", "lauriol plaza restaurant", "1835 18th", "11:50 AM", "54"],
];

function Sort() {
  return (
    <svg className="h-[15px] w-[9px] shrink-0" viewBox="0 0 9 15">
      <path d="M4.5 0 8.6 6.4H.4ZM4.5 15 8.600 8.600H.4Z" fill="#d6d6d6" />
    </svg>
  );
}

function Table() {
  const cell = "flex items-center border-r border-[#ddd] px-[10px]";
  return (
    <>
      <div className={`grid ${COLS} mt-[2px] h-[44px] w-[1126px] items-center pt-[2px] text-[12.56px] font-bold text-[#444]`}>
        {HEADS.map(([h, pad]) => (
          <div key={h} className={`${pad} flex items-center justify-between pr-1 leading-5 whitespace-nowrap`}>
            <span>{h}</span>
            <Sort />
          </div>
        ))}
      </div>
      <div className="flex h-[225px] overflow-hidden border-b border-[#ccc]">
        <div className="w-[1127px] border-l border-[#ddd] text-[12.56px] leading-5 text-[#444]">
          {ROWS.map(([id, name, addr, time, badge], i) => (
            <div key={id} className={`grid ${COLS} ${i ? "h-[37px]" : "h-[57px]"} ${i % 2 ? "bg-white" : "bg-[#f9f9f9]"} border-b border-[#ddd]`}>
              <div className="flex items-center justify-between border-r border-[#ddd] pr-[10px] pl-[5px]">
                <svg className={`size-4 overflow-visible drop-shadow-[0_0_2px_#555] ${i ? "" : "-mt-5"}`} viewBox="0 0 16 16">
                  <circle cx="8" cy="8" r="8" fill="#31b131" stroke="#fff" strokeWidth="2" />
                  <path d="M8 4.6v6.8M4.6 8h6.8" stroke="#fff" strokeWidth="1.6" />
                </svg>
                <span>{id}</span>
              </div>
              <div className={`${cell} whitespace-pre`}>{name}</div>
              <div className={cell}>{addr}</div>
              <div className={cell}>restaurant total</div>
              <div className={cell}>nw</div>
              <div className={`${cell} justify-end`}>4</div>
              <div className={cell}>{time}</div>
              <div className={cell}>{badge}</div>
            </div>
          ))}
        </div>
        <div className="flex w-[15px] justify-center border-x border-[#e8e8e8] bg-[#fafafa] pt-px">
          <div className="h-[108px] w-2 rounded-full bg-[#c1c1c1]" />
        </div>
      </div>
    </>
  );
}

export default function App() {
  return (
    <div className={`${UI} relative flex h-[1164px] w-[1409px] flex-col overflow-hidden bg-[#f0f0f0] text-[12.56px] text-[#444]`}>
      <header className="flex h-[50px] items-center border-b-4 border-[#e4e4e4] bg-white pb-[3px] pl-[11px] text-[#999]">
        <h1 className="text-[15.8px] leading-6 font-medium">Virtual Risk Explorer</h1>
        <span className="ml-auto text-[12.4px] font-medium">About me</span>
        <FaTwitter className="mt-px ml-[30px] size-[13px]" />
        <FaFacebookF className="ml-[57px] size-[13px]" />
        <FaShareAlt className="ml-[28px] size-3" />
        <span className="w-[4px]" />
      </header>

      <div className="flex min-h-0 grow">
        <aside className="w-[245px] shrink-0 border-r border-[#ddd] bg-[#fdfdfd]">
          <p className="h-[70px] px-[5px] text-[12.65px] leading-5 font-bold whitespace-nowrap">
            This is DC Department of Health
            <br />
            Inspection Risk Explorer Application.
          </p>
          <Filter title="Risk 3 - Years 2010-2017." slider={{ min: 2010, max: 2017, from: 2010, to: 2017 }} regions={["ne", "nw", "se", "sw"]} />
          <Filter title="Risk 4 - Years 2010-2017." slider={{ min: 2010, max: 2017, from: 2012, to: 2015 }} regions={["ne", "nw", "se", "sw"]} checked="nw" />
          <Filter title="Risk 5 - Years 2010-2017." slider={{ min: 2011, max: 2017, from: 2011, to: 2017 }} regions={["nw", "se"]} />
        </aside>

        <main className="flex min-h-0 grow flex-col gap-2 pt-[9px] pl-2">
          <section className="h-[711px] shrink-0 rounded-l-[3px] border border-r-0 border-[#ddd] bg-white">
            <Tabs active={0} tabs={[["DC Risk Explorer Map", "w-[141px]", "pl-[11px]"], ["Risk Cat 3 Establishments", "w-[170px]", "pl-4"]]} />
            <div className="relative mt-2 ml-2 w-[1142px]">
              <RiskMap />
              <div className="absolute top-[10px] left-[10px] flex w-[26px] flex-col gap-[10px]">
                <div className="h-[52px] rounded-[4px] bg-white">
                  <svg className="block h-[52px] w-[26px]" viewBox="0 0 26 52">
                    <path d="M0 25.5h26" stroke="#ccc" />
                    <path d="M13.5 9v10M8.5 14h10M9 38.5h9" stroke="#000" strokeWidth="2" />
                  </svg>
                </div>
                <div className="h-[26px] rounded-[4px] bg-white">
                  <svg className="block size-[26px]" viewBox="0 0 26 26" fill="none" stroke="#222" strokeWidth="1.1">
                    <path d="M9 9l2.500 2.500M17 9l-2.500 2.500M9 17.500l2.500-2.500M17 17.500l-2.500-2.500M11.500 9v2.800H9M14.500 9v2.800h2.500M11.500 17.500v-2.800H9M14.500 17.500v-2.800h2.500" />
                  </svg>
                </div>
              </div>
              <div className="absolute top-[10px] right-[10px] flex h-[86px] w-[98px] flex-col rounded-[5px] bg-white pt-[5px] pl-3 font-['Liberation_Sans',sans-serif] text-xs text-[#333]">
                {["Risk Cat 3", "Risk Cat 4", "Risk Cat 5"].map((t, i) => (
                  <div key={t} className="flex h-[24.6px] items-center gap-1">
                    <span className="mt-[2px] flex"><Check on={i === 1} /></span>
                    {t}
                  </div>
                ))}
              </div>
              <div className="absolute right-0 bottom-0 h-4 w-[199px] bg-white/70 pl-[5px] font-['Liberation_Sans',sans-serif] text-[11.080px] leading-4 whitespace-nowrap text-[#333]">
                <span className="text-[#0078a8]">Leaflet</span> | © <span className="text-[#0078a8]">OpenStreetMap</span> © <span className="text-[#0078a8]">CartoDB</span>
              </div>
            </div>
          </section>

          <section className="min-h-0 grow rounded-tl-[3px] border border-r-0 border-[#ddd] bg-white">
            <Tabs active={1} tabs={[["Risk Cat3 Region Distribution", "w-[191px]", "pl-[11px]"], ["Risk Cat 4 Establishments", "w-[166px]", "pl-[10px]"], ["Risk Cat 5 Establishments", "w-[171px]", "pl-4"]]} />
            <div className="ml-2 w-[1142px]">
              <div className="mt-2 flex h-[28px] text-[#333]">
                <span className="leading-[22px]">Show</span>
                <span className="ml-[2px] flex h-[21px] w-[56px] overflow-hidden rounded-[4px] border border-[#c6c6c6] bg-white pl-2 leading-[20px]">
                  10
                  <svg className="-mt-px -mr-px ml-auto h-[21px] w-[17px] bg-[#2a86fb]" viewBox="0 0 17 21" fill="none" stroke="#fff" strokeWidth="1.5">
                    <path d="M5.500 8.500 8.500 5.500 11.500 8.500M5.500 12.500 8.500 15.500 11.500 12.500" />
                  </svg>
                </span>
                <span className="ml-[3px] leading-[22px]">entries</span>
                <span className="ml-auto leading-[28px]">Search:</span>
                <span className="ml-[7px] h-[28px] w-[149px] border border-[#c8c8c8]" />
              </div>
              <Table />
              <div className="flex h-10 text-[#333]">
                <span className="leading-[20px]">Showing 1 to 10 of 37 entries (filtered from 110 total entries)</span>
                <div className="ml-auto flex pt-1 leading-9">
                  <span className="w-[68px] text-[#666]">Previous</span>
                  <span className="h-9 w-[37px] rounded-[2px] border border-[#979797] bg-linear-to-b from-white to-[#dcdcdc] text-center leading-[34px]">1</span>
                  <span className="w-[39px] pl-[2px] text-center">2</span>
                  <span className="w-[39px] pl-[2px] text-center">3</span>
                  <span className="w-[39px] pl-[2px] text-center">4</span>
                  <span className="w-[59px] pl-[17px]">Next</span>
                </div>
              </div>
            </div>
          </section>
        </main>
      </div>

      <div className="absolute top-[940px] left-0 h-[210px] w-[6px] bg-[radial-gradient(ellipse_at_left,rgba(0,0,0,0.09),transparent_70%)]" />
      <div className="absolute bottom-0 left-0 h-[7px] w-[473px] overflow-hidden border-t border-r border-[#bbb] bg-[#f6f6f6] pt-[3px] font-['Liberation_Sans',sans-serif] text-[11px] leading-3 whitespace-nowrap text-[#333]">
        file:///Users/riskladdin/Documents/opr/Projects/Inspections_DC/dataImportclient.pitchTrack/index
      </div>
    </div>
  );
}
